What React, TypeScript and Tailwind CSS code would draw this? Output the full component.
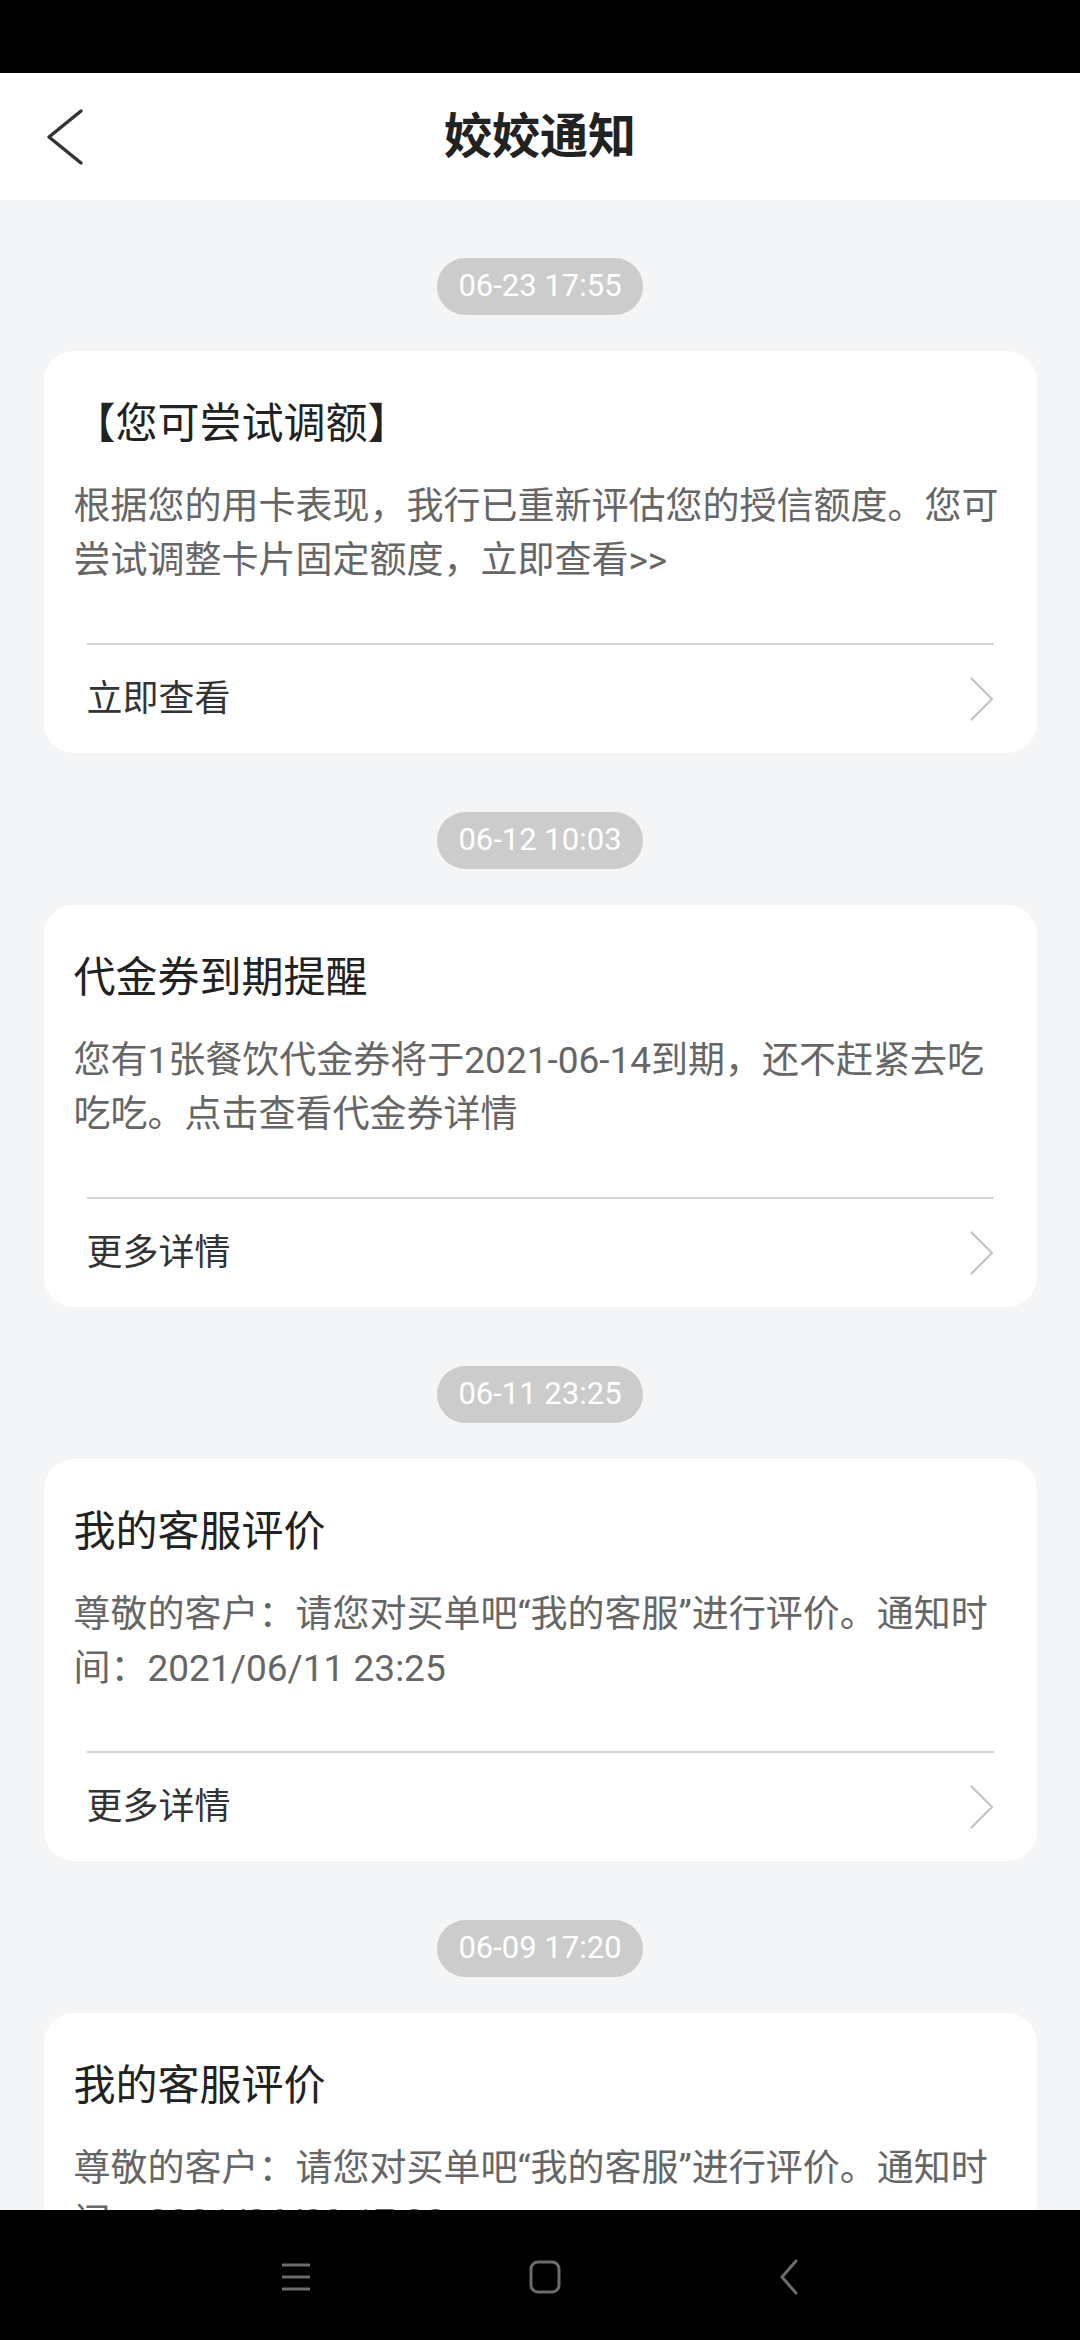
import React from 'react';

type Notice = {
  time: string;
  title: string;
  body: string;
  action: string;
};

const notices: Notice[] = [
  {
    time: '06-23 17:55',
    title: '【您可尝试调额】',
    body: '根据您的用卡表现，我行已重新评估您的授信额度。您可尝试调整卡片固定额度，立即查看>>',
    action: '立即查看',
  },
  {
    time: '06-12 10:03',
    title: '代金券到期提醒',
    body: '您有1张餐饮代金券将于2021-06-14到期，还不赶紧去吃吃吃。点击查看代金券详情',
    action: '更多详情',
  },
  {
    time: '06-11 23:25',
    title: '我的客服评价',
    body: '尊敬的客户：请您对买单吧“我的客服”进行评价。通知时间：2021/06/11 23:25',
    action: '更多详情',
  },
  {
    time: '06-09 17:20',
    title: '我的客服评价',
    body: '尊敬的客户：请您对买单吧“我的客服”进行评价。通知时间：2021/06/09 17:20',
    action: '更多详情',
  },
];

const font = { fontFamily: 'Roboto, "Noto Sans CJK SC", sans-serif' };

const NoticeCard = ({ item }: { item: Notice }) => (
  <div className="flex flex-col items-center">
    <div className="h-[57px] px-[21px] rounded-full bg-[#cccccc] text-white text-[31px] flex items-center">
      {item.time}
    </div>
    <div className="mt-[36px] w-[993px] h-[402px] shrink-0 bg-white rounded-[30px] flex flex-col">
      <div className="px-[30px] pt-[45px]">
        <p className="text-[42px] leading-[56px] text-[#222]">{item.title}</p>
        <p className="mt-[28px] text-[37px] leading-[54px] text-[#666]">{item.body}</p>
      </div>
      <div className="mt-auto mx-[43px] border-t-2 border-[#d6d6d6] h-[110px] flex items-center justify-between">
        <span className="text-[36px] text-[#333]">{item.action}</span>
        <svg width="24" height="44" viewBox="0 0 24 44" fill="none">
          <path d="M1.5 1.5 L22 22 L1.5 42.5" stroke="#c4c4c4" strokeWidth="2.2" strokeLinecap="round" strokeLinejoin="round" />
        </svg>
      </div>
    </div>
  </div>
);

export default function App() {
  return (
    <div className="w-[1080px] h-[2340px] flex flex-col overflow-hidden bg-[#f4f5f7]" style={font}>
      {/* status bar */}
      <div className="h-[73px] shrink-0 bg-black" />

      {/* header */}
      <div className="h-[127px] shrink-0 bg-white flex items-center relative">
        <svg className="ml-[46px]" width="38" height="58" viewBox="0 0 38 58" fill="none">
          <path d="M35 3 L3 29 L35 55" stroke="#333" strokeWidth="3.5" strokeLinecap="round" strokeLinejoin="round" />
        </svg>
        <h1 className="absolute left-0 right-0 text-center text-[48px] font-bold text-[#222] pointer-events-none">
          姣姣通知
        </h1>
      </div>

      {/* list */}
      <div className="flex-1 overflow-hidden pt-[58px] flex flex-col gap-[59px]">
        {notices.map((n, i) => (
          <NoticeCard key={i} item={n} />
        ))}
      </div>

      {/* nav bar */}
      <div className="h-[130px] shrink-0 bg-black flex items-center justify-center">
        <div className="w-[520px] flex items-center justify-between pt-[4px]">
          <svg width="32" height="30" viewBox="0 0 32 30" fill="none">
            <path d="M2 3 H30 M2 15 H30 M2 27 H30" stroke="#6b6b6b" strokeWidth="3" />
          </svg>
          <svg width="34" height="34" viewBox="0 0 34 34" fill="none">
            <rect x="3" y="2" width="28" height="30" rx="7" stroke="#6b6b6b" strokeWidth="3" />
          </svg>
          <svg width="22" height="36" viewBox="0 0 22 36" fill="none">
            <path d="M18 2 L4 18 L18 34" stroke="#6b6b6b" strokeWidth="3" strokeLinecap="round" strokeLinejoin="round" />
          </svg>
        </div>
      </div>
    </div>
  );
}
